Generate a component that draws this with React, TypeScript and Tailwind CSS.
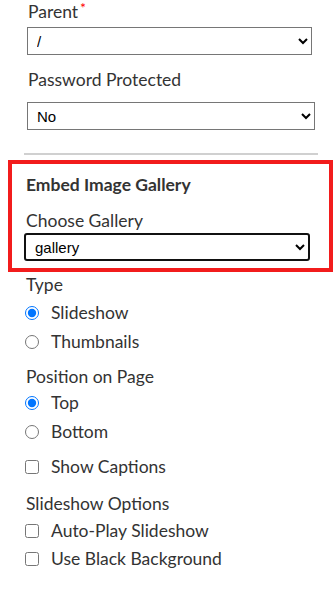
import React from "react";

function RadioRow({ name, label, checked }: { name: string; label: string; checked?: boolean }) {
  return (
    <label className="flex h-[29px] items-center pl-[25px]">
      <input type="radio" name={name} defaultChecked={checked} className="m-0 h-[14px] w-[14px]" />
      <span className="ml-[12px]">{label}</span>
    </label>
  );
}

function CheckRow({ label, h = "h-[29px]" }: { label: string; h?: string }) {
  return (
    <label className={`flex items-center pl-[25px] ${h}`}>
      <input type="checkbox" className="m-0 h-[14px] w-[14px]" />
      <span className="ml-[12px]">{label}</span>
    </label>
  );
}

export default function App() {
  return (
    <div className="flex w-[334px] flex-col bg-white pt-[1px] font-['Lato','Noto_Sans',sans-serif] text-[17.5px] leading-[22px] text-[#333]">
      <div className="pl-[28px] leading-[21px]">
        Parent<span className="relative top-[-5px] ml-[2px] text-[14px] leading-none text-[#f00]">*</span>
      </div>
      <select className="ml-[27px] mt-[5px] h-[28px] w-[285px] border border-[#767676] pl-[5px] font-['Liberation_Sans',sans-serif] text-[15px] text-black">
        <option>/</option>
      </select>

      <div className="mt-[14px] pl-[28px]">Password Protected</div>
      <select className="ml-[27px] mt-[11px] h-[28px] w-[288px] border border-[#767676] pl-[5px] font-['Liberation_Sans',sans-serif] text-[15px] text-black">
        <option>No</option>
        <option>Yes</option>
      </select>

      <hr className="ml-[24px] mt-[23px] w-[294px] border-t-2 border-[#d0d0d0]" />

      <div className="ml-[8px] mt-[5px] w-[325px] border-[4px] border-[#f21c1c] pb-[7px] pl-[12px] pt-[10px]">
        <div className="ml-[2px] font-bold">Embed Image Gallery</div>
        <div className="ml-[2px] mt-[14px]">Choose Gallery</div>
        <select className="mt-[1px] h-[28px] w-[286px] rounded-[3px] border-2 border-[#111] pl-[5px] font-['Liberation_Sans',sans-serif] text-[15px] text-black">
          <option>gallery</option>
        </select>
      </div>

      <div className="mt-[2px] pl-[26px]">Type</div>
      <div className="mt-[2px]">
        <RadioRow name="type" label="Slideshow" checked />
        <RadioRow name="type" label="Thumbnails" />
      </div>

      <div className="mt-[10px] pl-[26px]">Position on Page</div>
      <div>
        <RadioRow name="pos" label="Top" checked />
        <RadioRow name="pos" label="Bottom" />
      </div>

      <div className="mt-[6px]">
        <CheckRow label="Show Captions" />
      </div>

      <div className="mt-[12px] pl-[26px]">Slideshow Options</div>
      <div className="mt-[2px]">
        <CheckRow label="Auto-Play Slideshow" h="h-[28px]" />
        <CheckRow label="Use Black Background" h="h-[28px]" />
      </div>
    </div>
  );
}
